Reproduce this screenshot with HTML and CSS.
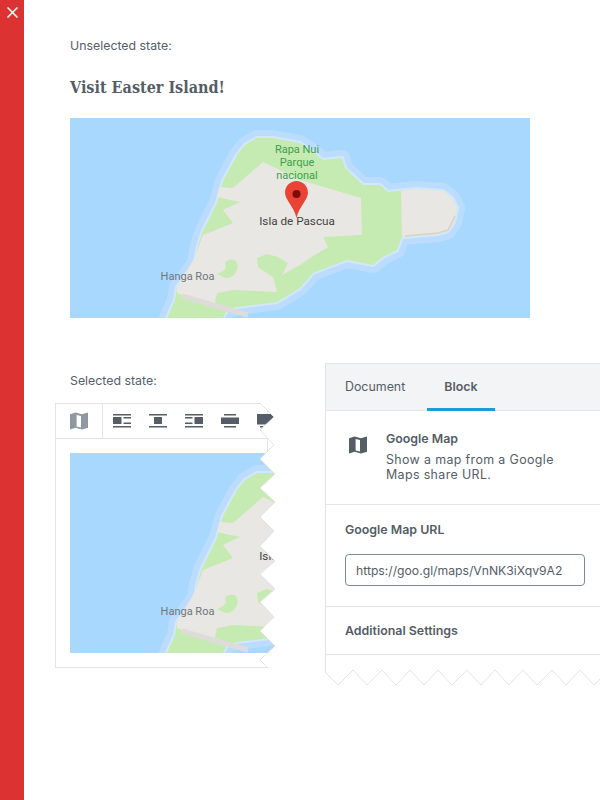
FILE: index.html
```html
<!DOCTYPE html>
<html lang="en">
<head>
<meta charset="utf-8">
<title>Google Map block</title>
<link rel="stylesheet" href="styles.css">
</head>
<body>
<svg class="defs" width="0" height="0" aria-hidden="true">
  <defs>
    <path id="coast" d="M187 20 203 20 230 25 243 34 253 42 272 40 275 50 293 67 310 67 318 74 347 71 373 73 382 80 387 90 384 104 378 113 368 116 332 119 327 132 313 139 303 147 277 142 243 155 230 170 207 184 167 189 157 192 153 200 97 200 105 182 107 169 125 145 127 132 132 115 147 85 153 63 160 50 167 37 175 27Z"/>
    <symbol id="mapicon" viewBox="0 0 18 18">
      <path d="M0 2.200 5.600.4 12 2.200 18 .4V15.800L12 17.600 5.600 15.800 0 17.600ZM6.600 3V14.600L11 15.600V4Z" fill-rule="evenodd"/>
    </symbol>
    <symbol id="easter" viewBox="0 0 460 200">
      <rect width="460" height="200" fill="#a9d8ff"/>
      <use href="#coast" class="halo-out"/>
      <use href="#coast" class="halo-in"/>
      <use href="#coast" class="land"/>
      <path class="grey-land" d="M193 44 230 62 291 80 292 117 253 119 258 129 240 140 230 147 212 157 218 145 208 139 197 136 187 140 188 149 203 159 207 174 163 172 147 175 145 184 153 192 107 175 107 169 125 139 133 117 163 105 153 92 170 84 147 79 150 69 163 70Z"/>
      <path class="grey-land" d="M331 73 347 71 373 73 382 80 387 90 384 104 378 113 368 116 332 119Z"/>
      <path class="land" d="M155 145c2-4 10-5 12 0 2 5-1 9-3 12-3 3-8 4-11 2l-6-3 6-3 3-3Z"/>
      <path class="runway" d="M112 178 178 197"/>
      <path class="sand" d="M335 118 368 115 378 112 385 98"/>
      <g class="maptxt green">
        <text x="227" y="35">Rapa Nui</text>
        <text x="227" y="48">Parque</text>
        <text x="227" y="61">nacional</text>
      </g>
      <text class="maptxt dark" x="227" y="107">Isla de Pascua</text>
      <text class="maptxt grey" x="117.500" y="162">Hanga Roa</text>
      <path class="pin" d="M226.500 63c6.200 0 11.500 5 11.500 11.500 0 7.500-8.500 13-11.500 25.500-3-12.500-11.500-18-11.500-25.500C215 68 220.300 63 226.500 63Z"/>
      <circle class="pin-dot" cx="226.500" cy="76" r="4"/>
    </symbol>
  </defs>
</svg>
<div class="page">
  <aside class="rail">
    <svg class="close" viewBox="0 0 11 11" width="11" height="11"><path d="M.5.5 10.500 10.500M10.500.5.5 10.500"/></svg>
  </aside>
  <main class="main">
    <p class="label first">Unselected state:</p>
    <h2 class="title">Visit Easter Island!</h2>
    <svg class="map"><use href="#easter"/></svg>

    <div class="lower">
      <section class="selected">
        <p class="label second">Selected state:</p>
        <div class="block">
          <div class="toolbar">
            <div class="tool-type"><svg class="ticon"><use href="#mapicon"/></svg></div>
            <div class="tool-align">
              <svg class="aicon" viewBox="0 0 18 14"><path d="M0 0H18V1.500H0ZM0 12H18V13.500H0ZM0 3H8.500V10H0ZM10.500 3H18V4.500H10.500ZM10.500 8.500H18V10H10.500Z"/></svg>
              <svg class="aicon" viewBox="0 0 18 14"><path d="M0 0H18V1.500H0ZM0 12H18V13.500H0ZM5 3H13V10H5Z"/></svg>
              <svg class="aicon" viewBox="0 0 18 14"><path d="M0 0H18V1.500H0ZM0 12H18V13.500H0ZM9.500 3H18V10H9.500ZM0 3H7.500V4.500H0ZM0 8.500H7.500V10H0Z"/></svg>
              <svg class="aicon" viewBox="0 0 18 14"><path d="M3 0H15V1.500H3ZM3 12H15V13.500H3ZM0 3.500H18V10H0Z"/></svg>
              <svg class="aicon" viewBox="0 0 18 14"><path d="M0 0H18V10.500H0ZM3 12H18V13.500H3Z"/></svg>
            </div>
          </div>
          <div class="block-body">
            <svg class="map"><use href="#easter"/></svg>
          </div>
          <svg class="torn" viewBox="0 0 20 265" width="20" height="265">
            <path class="torn-fill" d="M5 0 19 14 5 27 19 42 5 56 20 71 5 85 20 99 5 114 19 128 5 143 20 158 5 171 20 186 5 199 19 214 5 228 20 243 5 257 13 265H20V0Z"/>
            <path class="torn-line" d="M5 0 19 14 5 27 19 42 5 56 20 71 5 85 20 99 5 114 19 128 5 143 20 158 5 171 20 186 5 199 19 214 5 228 20 243 5 257 13 265"/>
          </svg>
        </div>
      </section>

      <aside class="panel">
        <div class="panel-inner">
          <div class="tabs">
            <span class="tab">Document</span>
            <span class="tab active">Block</span>
          </div>
          <div class="card">
            <svg class="card-icon"><use href="#mapicon"/></svg>
            <div class="card-text">
              <h3 class="card-title">Google Map</h3>
              <p class="card-desc">Show a map from a Google Maps share URL.</p>
            </div>
          </div>
          <div class="field">
            <label class="field-label" for="url">Google Map URL</label>
            <input class="field-input" id="url" type="text" value="https://goo.gl/maps/VnNK3iXqv9A2">
          </div>
          <div class="more">Additional Settings</div>
        </div>
        <svg class="zig" viewBox="0 0 275 16" width="275" height="16">
          <path d="M0 2 13 15 28 0 42 15 57 0 71 15 85 0 99 15 113 0 127 15 142 0 156 15 170 0 184 15 198 0 212 15 227 0 241 15 255 0 269 15 275 9"/>
        </svg>
      </aside>
    </div>
  </main>
</div>
</body>
</html>
```
FILE: styles.css
```css
* { box-sizing: border-box; }
html, body { margin: 0; padding: 0; background: #fff; }
body { font-family: Inter, "Noto Sans", sans-serif; color: #555d66; overflow: hidden; }
.defs { position: absolute; }
.page { display: flex; width: 600px; height: 800px; overflow: hidden; }
.rail { width: 24px; flex: none; background: #dc3232; display: flex; justify-content: center; align-items: flex-start; padding-top: 7px; }
.close { fill: none; stroke: #fff; stroke-width: 1.500; }
.main { flex: none; width: 576px; padding-left: 46px; }
.label { margin: 0; font-size: 12.350px; line-height: 18px; color: #555d66; }
.label.first { margin-top: 37px; }
.title { margin: 21px 0 0; font-family: "DejaVu Serif Condensed", "DejaVu Serif", serif; font-size: 16px; line-height: 24px; font-weight: 700; color: #555d66; }
.map { display: block; width: 460px; height: 200px; }
.title + .map { margin-top: 18px; }
.lower { display: flex; margin-top: 45px; }
.selected { width: 255px; flex: none; }
.label.second { margin-top: 9px; }
.block { position: relative; margin: 13px 0 0 -15px; width: 213px; height: 265px; border: 1px solid #e2e4e7; }
.toolbar { display: flex; height: 35px; border-bottom: 1px solid #e2e4e7; width: 219px; overflow: hidden; }
.tool-type { width: 47px; flex: none; display: flex; align-items: center; padding-left: 14px; border-right: 1px solid #e2e4e7; }
.ticon { width: 18px; height: 18px; fill: #8f98a1; }
.tool-align { display: flex; gap: 18px; padding: 10px 0 0 10px; }
.aicon { width: 18px; height: 14px; flex: none; fill: #555d66; }
.block-body { padding: 14px 0 0 14px; height: 229px; overflow: hidden; width: 219px; }
.torn { position: absolute; left: 199px; top: -1px; }
.torn-fill { fill: #fff; }
.torn-line { fill: none; stroke: #e2e4e7; stroke-width: 1; }
.panel { width: 275px; flex: none; }
.panel-inner { border-left: 1px solid #e2e4e7; height: 309px; }
.tabs { display: flex; height: 48px; background: #f3f4f5; border-top: 1px solid #e2e4e7; border-bottom: 1px solid #e2e4e7; padding-left: 19px; }
.tab { font-size: 12.400px; line-height: 45px; color: #555d66; }
.tab.active { font-weight: 600; margin-left: 22px; padding: 0 18px 0 17px; height: 47px; border-bottom: 3px solid #1a9fd4; }
.card { display: flex; height: 94px; border-bottom: 1px solid #e2e4e7; padding: 25px 0 0 23px; }
.card-icon { width: 18px; height: 18px; flex: none; fill: #555d66; }
.card-text { margin: -6px 0 0 19px; }
.card-title { margin: 0; font-size: 12.400px; line-height: 18px; font-weight: 600; color: #555d66; }
.card-desc { margin: 4px 0 0; width: 190px; font-size: 12.400px; line-height: 15px; letter-spacing: .38px; color: #555d66; }
.field { height: 102px; border-bottom: 1px solid #e2e4e7; padding: 16px 0 0 19px; }
.field-label { display: block; font-size: 12.400px; line-height: 18px; font-weight: 600; color: #555d66; }
.field-input { display: block; margin-top: 15px; width: 240px; height: 32px; padding: 0 10px; border: 1px solid #7e8993; border-radius: 4px; background: #fff; font: 12.200px Inter, sans-serif; color: #555d66; outline: none; }
.more { height: 48px; border-bottom: 1px solid #e2e4e7; padding-left: 19px; font-size: 12.400px; line-height: 48px; font-weight: 600; color: #555d66; }
.zig { display: block; margin-top: -2px; }
.zig path { fill: none; stroke: #e2e4e7; stroke-width: 1; }
.halo-out { fill: #bcdcfe; stroke: #bcdcfe; stroke-width: 16; stroke-linejoin: round; }
.halo-in { fill: #d3e7fb; stroke: #d3e7fb; stroke-width: 4; stroke-linejoin: round; }
.land { fill: #c5ebb3; }
.grey-land { fill: #e9e7e3; }
.runway { fill: none; stroke: #dedcd8; stroke-width: 5; }
.sand { fill: none; stroke: #d9d2c5; stroke-width: 1.500; }
.pin { fill: #ea4335; }
.pin-dot { fill: #7d0d0a; }
.maptxt { font-family: Roboto, sans-serif; text-anchor: middle; font-size: 11px; }
.green { fill: #3f9e48; }
.dark { fill: #444; font-size: 11.700px; }
.grey { fill: #70757a; }
```
